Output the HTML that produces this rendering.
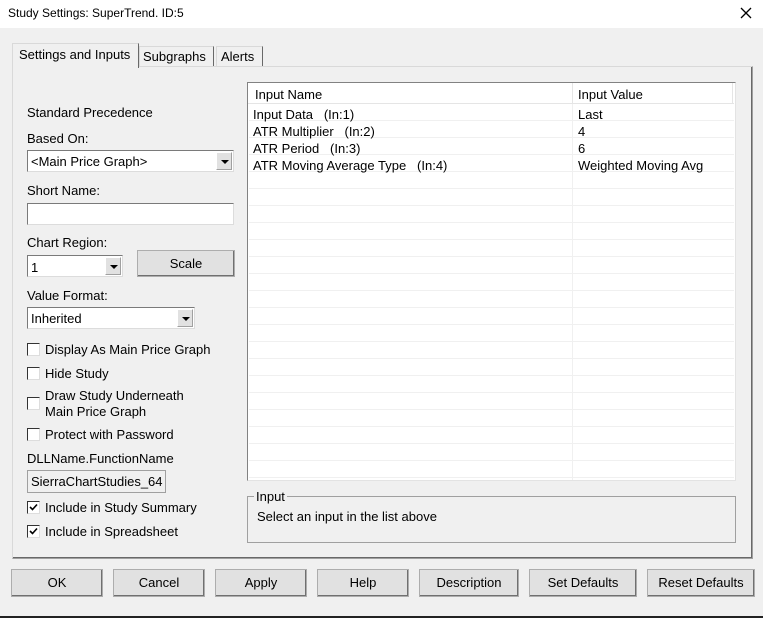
<!DOCTYPE html>
<html><head><style>
*{box-sizing:border-box;margin:0;padding:0}
body{width:763px;height:618px;background:#f0f0f0;font-family:"Liberation Sans",sans-serif;font-size:13px;color:#000;position:relative;overflow:hidden}
.a{position:absolute;white-space:nowrap}
.title{left:0;top:0;width:763px;height:28px;background:#fff}
.btn{position:absolute;height:28px;background:#e1e1e1;border:1px solid #adadad;box-shadow:inset -1px -1px #707070;text-align:center;line-height:26px;font-size:13px}
.in{position:absolute;background:#fff;border:1px solid #7a7a7a;border-right-color:#dcdcdc;border-bottom-color:#dcdcdc}
.dd{position:absolute;width:16px;top:1px;bottom:1px;right:1px;background:#e1e1e1;border:1px solid #a0a0a0;border-top-color:#fff;border-left-color:#fff}
.dd:after{content:"";position:absolute;left:4px;top:7px;border-left:4px solid transparent;border-right:4px solid transparent;border-top:4px solid #000}
.cb{position:absolute;width:13px;height:13px;background:#fff;border:1px solid #333;border-right-color:#ddd;border-bottom-color:#ddd}
.cb svg{position:absolute;left:1px;top:1px}
.row{position:absolute;left:1px;right:1px;height:17px;border-bottom:1px solid #f0f0f0}
</style></head><body>
<div class="a title"></div>
<div class="a" style="left:8px;top:6px;font-size:12px">Study Settings: SuperTrend. ID:5</div>
<svg class="a" style="left:740px;top:7px" width="12" height="12"><path d="M1 1L11 11M11 1L1 11" stroke="#000" stroke-width="1.3"/></svg>

<!-- tab panel -->
<div class="a" style="left:12px;top:66px;width:741px;height:493px;border:1px solid #d9d9d9;border-right-color:#a0a0a0;border-bottom-color:#a0a0a0;box-shadow:inset -1px -1px #696969"></div>
<div class="a" style="left:12px;top:43px;width:127px;height:25px;background:#f0f0f0;border:1px solid #d9d9d9;border-bottom:none;border-right:1px solid #696969"></div>
<div class="a" style="left:19px;top:47px">Settings and Inputs</div>
<div class="a" style="left:139px;top:46px;width:75px;height:20px;border:1px solid #d9d9d9;border-bottom:none;border-right:1px solid #696969"></div>
<div class="a" style="left:143px;top:49px">Subgraphs</div>
<div class="a" style="left:216px;top:46px;width:47px;height:20px;border:1px solid #d9d9d9;border-bottom:none;border-right:1px solid #696969"></div>
<div class="a" style="left:221px;top:49px">Alerts</div>

<!-- left column -->
<div class="a" style="left:27px;top:105px">Standard Precedence</div>
<div class="a" style="left:27px;top:131px">Based On:</div>
<div class="in" style="left:27px;top:150px;width:207px;height:22px"><div class="a" style="left:3px;top:3px">&lt;Main Price Graph&gt;</div><div class="dd"></div></div>
<div class="a" style="left:27px;top:183px">Short Name:</div>
<div class="in" style="left:27px;top:203px;width:207px;height:22px"></div>
<div class="a" style="left:27px;top:235px">Chart Region:</div>
<div class="in" style="left:27px;top:255px;width:96px;height:22px"><div class="a" style="left:3px;top:4px">1</div><div class="dd"></div></div>
<div class="btn" style="left:137px;top:250px;width:98px;height:27px">Scale</div>
<div class="a" style="left:27px;top:288px">Value Format:</div>
<div class="in" style="left:27px;top:307px;width:168px;height:22px"><div class="a" style="left:3px;top:3px">Inherited</div><div class="dd"></div></div>

<div class="cb" style="left:27px;top:343px"></div><div class="a" style="left:45px;top:342px">Display As Main Price Graph</div>
<div class="cb" style="left:27px;top:367px"></div><div class="a" style="left:45px;top:366px">Hide Study</div>
<div class="cb" style="left:27px;top:397px"></div><div class="a" style="left:45px;top:388px;line-height:16px">Draw Study Underneath<br>Main Price Graph</div>
<div class="cb" style="left:27px;top:428px"></div><div class="a" style="left:45px;top:427px">Protect with Password</div>
<div class="a" style="left:27px;top:451px">DLLName.FunctionName</div>
<div class="a" style="left:27px;top:470px;width:139px;height:23px;border:1px solid #a0a0a0;background:#f0f0f0;overflow:hidden"><div class="a" style="left:3px;top:3px">SierraChartStudies_64</div></div>
<div class="cb" style="left:27px;top:501px"><svg width="9" height="9"><path d="M1 4L3.5 6.5L8 1.5" stroke="#000" stroke-width="1.6" fill="none"/></svg></div><div class="a" style="left:45px;top:500px">Include in Study Summary</div>
<div class="cb" style="left:27px;top:525px"><svg width="9" height="9"><path d="M1 4L3.5 6.5L8 1.5" stroke="#000" stroke-width="1.6" fill="none"/></svg></div><div class="a" style="left:45px;top:524px">Include in Spreadsheet</div>

<!-- list -->
<div class="a" style="left:247px;top:82px;width:489px;height:399px;background:#fff;border:1px solid #828282;border-right-color:#e3e3e3;border-bottom-color:#e3e3e3;overflow:hidden">
 <div class="a" style="left:0;top:0;width:486px;height:21px;border-bottom:1px solid #e5e5e5"></div>
 <div class="a" style="left:324px;top:0;width:1px;height:21px;background:#e5e5e5"></div>
 <div class="a" style="left:484px;top:0;width:1px;height:21px;background:#e5e5e5"></div>
 <div class="a" style="left:7px;top:4px">Input Name</div>
 <div class="a" style="left:330px;top:4px">Input Value</div>
 <div class="a" style="left:324px;top:21px;width:1px;height:380px;background:#f0f0f0"></div>
 <div class="row" style="top:21px"></div><div class="row" style="top:38px"></div><div class="row" style="top:55px"></div><div class="row" style="top:72px"></div><div class="row" style="top:89px"></div><div class="row" style="top:106px"></div><div class="row" style="top:123px"></div><div class="row" style="top:140px"></div><div class="row" style="top:157px"></div><div class="row" style="top:174px"></div><div class="row" style="top:191px"></div><div class="row" style="top:208px"></div><div class="row" style="top:225px"></div><div class="row" style="top:242px"></div><div class="row" style="top:259px"></div><div class="row" style="top:276px"></div><div class="row" style="top:293px"></div><div class="row" style="top:310px"></div><div class="row" style="top:327px"></div><div class="row" style="top:344px"></div><div class="row" style="top:361px"></div><div class="row" style="top:378px"></div>
 <div class="a" style="left:5px;top:24px">Input Data&nbsp;&nbsp; (In:1)</div><div class="a" style="left:330px;top:24px">Last</div>
 <div class="a" style="left:5px;top:41px">ATR Multiplier&nbsp;&nbsp; (In:2)</div><div class="a" style="left:330px;top:41px">4</div>
 <div class="a" style="left:5px;top:58px">ATR Period&nbsp;&nbsp; (In:3)</div><div class="a" style="left:330px;top:58px">6</div>
 <div class="a" style="left:5px;top:75px">ATR Moving Average Type&nbsp;&nbsp; (In:4)</div><div class="a" style="left:330px;top:75px">Weighted Moving Avg</div>
</div>

<!-- group -->
<div class="a" style="left:247px;top:496px;width:489px;height:47px;border:1px solid #a0a0a0"></div>
<div class="a" style="left:254px;top:489px;background:#f0f0f0;padding:0 2px">Input</div>
<div class="a" style="left:257px;top:509px">Select an input in the list above</div>

<!-- buttons -->
<div class="btn" style="left:11px;top:569px;width:92px">OK</div>
<div class="btn" style="left:113px;top:569px;width:92px">Cancel</div>
<div class="btn" style="left:215px;top:569px;width:92px">Apply</div>
<div class="btn" style="left:317px;top:569px;width:92px">Help</div>
<div class="btn" style="left:419px;top:569px;width:100px">Description</div>
<div class="btn" style="left:529px;top:569px;width:108px">Set Defaults</div>
<div class="btn" style="left:647px;top:569px;width:108px">Reset Defaults</div>
<div class="a" style="left:0;top:616px;width:763px;height:2px;background:#222"></div>
</body></html>
